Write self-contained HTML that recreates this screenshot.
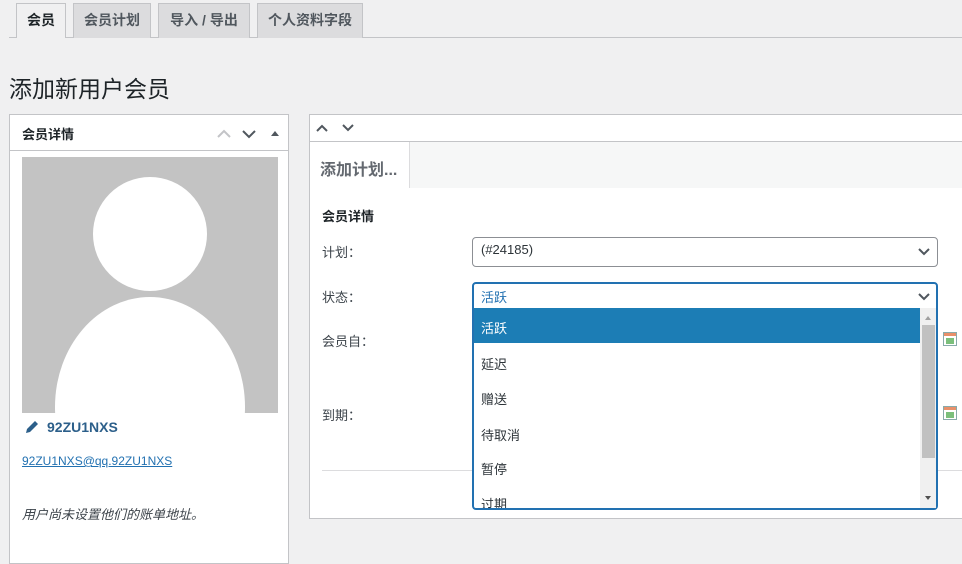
<!DOCTYPE html>
<html><head><meta charset="utf-8"><style>
*{box-sizing:border-box;margin:0;padding:0}
body{width:962px;height:550px;overflow:hidden;background:#f0f0f1;font-family:"Liberation Sans","Noto Sans CJK SC",sans-serif;color:#1d2327;position:relative;font-size:13px}
.a{position:absolute}
.tab{position:absolute;top:3px;height:35px;border:1px solid #c3c4c7;border-bottom:none;background:#dcdcde;font-weight:bold;font-size:14px;color:#50575e;line-height:33px;text-align:center}
.lbl{position:absolute;left:322px;font-size:13px;color:#3c434a}
.opt{position:absolute;left:481px;font-size:13px;color:#2c3338}
.chev{stroke:#50575e;stroke-width:2;fill:none}
</style></head><body>
<div class="a" style="left:9px;top:37px;width:953px;height:1px;background:#c3c4c7"></div>
<div class="tab" style="left:16px;width:50px;background:#f0f0f1;color:#1d2327;height:35px">会员</div>
<div class="tab" style="left:73px;width:78px">会员计划</div>
<div class="tab" style="left:158px;width:92px">导入 / 导出</div>
<div class="tab" style="left:257px;width:106px">个人资料字段</div>
<div class="a" style="left:9px;top:70px;font-size:23px;color:#1d2327">添加新用户会员</div>

<div class="a" style="left:9px;top:114px;width:280px;height:450px;background:#fff;border:1px solid #c3c4c7"></div>
<div class="a" style="left:10px;top:150px;width:278px;height:1px;background:#c3c4c7"></div>
<div class="a" style="left:22px;top:124px;font-weight:bold;font-size:13px">会员详情</div>
<svg class="a" style="left:214px;top:124px" width="70" height="18">
<path d="M4 13l6-6 6 6" stroke="#c3c4c7" stroke-width="2" fill="none"/>
<path d="M29 7l6 6 6-6" class="chev"/>
<path d="M57 12l4-5 4 5z" fill="#50575e"/></svg>
<div class="a" style="left:22px;top:157px;width:256px;height:256px;background:#c3c3c3;overflow:hidden">
<div class="a" style="left:71px;top:20px;width:114px;height:114px;border-radius:50%;background:#fff"></div>
<div class="a" style="left:33px;top:140px;width:190px;height:220px;border-radius:50%;background:#fff"></div>
</div>
<svg class="a" style="left:25px;top:420px" width="14" height="14"><path d="M1 13l1-4 8-8 3 3-8 8z" fill="#2c5f8a"/></svg>
<div class="a" style="left:47px;top:419px;font-weight:bold;font-size:14px;color:#2c5f8a">92ZU1NXS</div>
<div class="a" style="left:22px;top:454px;font-size:12px;color:#2271b1;text-decoration:underline">92ZU1NXS@qq.92ZU1NXS</div>
<div class="a" style="left:22px;top:504px;font-size:13px;font-style:italic;color:#3c434a">用户尚未设置他们的账单地址。</div>

<div class="a" style="left:309px;top:114px;width:700px;height:405px;background:#fff;border:1px solid #c3c4c7"></div>
<svg class="a" style="left:314px;top:120px" width="50" height="16">
<path d="M3 11l5-5 5 5" class="chev"/><path d="M29 5l5 5 5-5" class="chev"/></svg>
<div class="a" style="left:310px;top:141px;width:652px;height:1px;background:#c3c4c7"></div>
<div class="a" style="left:310px;top:142px;width:652px;height:46px;background:#f6f7f7"></div>
<div class="a" style="left:310px;top:142px;width:100px;height:46px;background:#fff;border-right:1px solid #dcdcde"></div>
<div class="a" style="left:320px;top:156px;font-weight:bold;font-size:16px;color:#646970">添加计划...</div>
<div class="a" style="left:322px;top:206px;font-weight:bold;font-size:13px">会员详情</div>
<div class="lbl" style="top:242px">计划：</div>
<div class="lbl" style="top:287px">状态：</div>
<div class="lbl" style="top:331px">会员自：</div>
<div class="lbl" style="top:405px">到期：</div>
<div class="a" style="left:322px;top:470px;width:640px;height:1px;background:#dcdcde"></div>
<div class="a" style="left:472px;top:237px;width:466px;height:30px;border:1px solid #8c8f94;border-radius:4px;background:#fff"></div>
<div class="a" style="left:481px;top:242px;font-size:13px;color:#2c3338">(#24185)</div>
<svg class="a" style="left:917px;top:247px" width="14" height="10"><path d="M2 2l5 5 5-5" class="chev"/></svg>
<div class="a" style="left:472px;top:282px;width:466px;height:228px;border:2px solid #2271b1;border-radius:4px;background:#fff"></div>
<div class="a" style="left:481px;top:287px;font-size:13px;color:#2271b1">活跃</div>
<svg class="a" style="left:917px;top:292px" width="14" height="10"><path d="M2 2l5 5 5-5" class="chev"/></svg>
<div class="a" style="left:474px;top:308px;width:446px;height:200px;overflow:hidden">
<div class="a" style="left:0;top:0;width:446px;height:35px;background:#1c7db5"></div>
</div>
<div class="opt" style="top:318px;color:#fff">活跃</div>
<div class="opt" style="top:354px">延迟</div>
<div class="opt" style="top:389px">赠送</div>
<div class="opt" style="top:425px">待取消</div>
<div class="opt" style="top:459px">暂停</div>
<div class="a" style="left:474px;top:494px;width:446px;height:14px;overflow:hidden"><div class="opt" style="left:7px;top:0px">过期</div></div>
<div class="a" style="left:920px;top:308px;width:16px;height:200px;background:#f0f0f0"></div>
<div class="a" style="left:922px;top:325px;width:13px;height:133px;background:#c1c1c1"></div>
<svg class="a" style="left:920px;top:310px" width="16" height="198"><path d="M5 10l3-4 3 4z" fill="#a0a0a0"/><path d="M5 186l3 4 3-4z" fill="#505050"/></svg>
<svg class="a" style="left:943px;top:332px" width="14" height="14"><rect x="0.5" y="0.5" width="13" height="13" fill="#fff" stroke="#8aa"/><rect x="1" y="1" width="12" height="3" fill="#e8906a"/><rect x="3" y="6" width="8" height="6" fill="#7bbf7b"/></svg>
<svg class="a" style="left:943px;top:406px" width="14" height="14"><rect x="0.5" y="0.5" width="13" height="13" fill="#fff" stroke="#8aa"/><rect x="1" y="1" width="12" height="3" fill="#e8906a"/><rect x="3" y="6" width="8" height="6" fill="#7bbf7b"/></svg>
</body></html>
